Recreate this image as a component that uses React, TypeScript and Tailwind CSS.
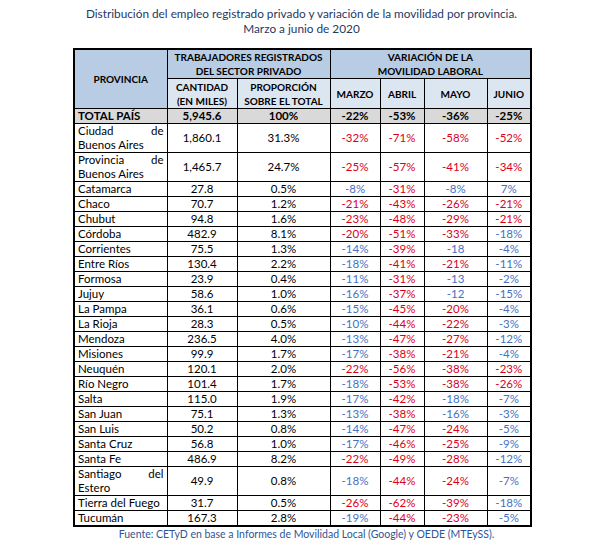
const ROWS: [string, string, string, number, number, number, number, boolean?][] = [
  ['Ciudad de|Buenos Aires', '1,860.1', '31.3%', -32, -71, -58, -52, true],
  ['Provincia de|Buenos Aires', '1,465.7', '24.7%', -25, -57, -41, -34, true],
  ['Catamarca', '27.8', '0.5%', -8, -31, -8, 7],
  ['Chaco', '70.7', '1.2%', -21, -43, -26, -21],
  ['Chubut', '94.8', '1.6%', -23, -48, -29, -21],
  ['Córdoba', '482.9', '8.1%', -20, -51, -33, -18],
  ['Corrientes', '75.5', '1.3%', -14, -39, -18, -4],
  ['Entre Ríos', '130.4', '2.2%', -18, -41, -21, -11],
  ['Formosa', '23.9', '0.4%', -11, -31, -13, -2],
  ['Jujuy', '58.6', '1.0%', -16, -37, -12, -15],
  ['La Pampa', '36.1', '0.6%', -15, -45, -20, -4],
  ['La Rioja', '28.3', '0.5%', -10, -44, -22, -3],
  ['Mendoza', '236.5', '4.0%', -13, -47, -27, -12],
  ['Misiones', '99.9', '1.7%', -17, -38, -21, -4],
  ['Neuquén', '120.1', '2.0%', -22, -56, -38, -23],
  ['Río Negro', '101.4', '1.7%', -18, -53, -38, -26],
  ['Salta', '115.0', '1.9%', -17, -42, -18, -7],
  ['San Juan', '75.1', '1.3%', -13, -38, -16, -3],
  ['San Luis', '50.2', '0.8%', -14, -47, -24, -5],
  ['Santa Cruz', '56.8', '1.0%', -17, -46, -25, -9],
  ['Santa Fe', '486.9', '8.2%', -22, -49, -28, -12],
  ['Santiago del|Estero', '49.9', '0.8%', -18, -44, -24, -7, true],
  ['Tierra del Fuego', '31.7', '0.5%', -26, -62, -39, -18],
  ['Tucumán', '167.3', '2.8%', -19, -44, -23, -5],
]

// cells without a % sign in the source
const NO_PCT = new Set(['Corrientes-2', 'Formosa-2', 'Jujuy-2'])

function pctClass(v: number, limit: number) {
  return v <= limit ? 'text-[#d9001b]' : 'text-[#4472c4]'
}

const LIMITS = [-20, -30, -20, -20]

export default function App() {
  return (
    <div className="h-[551px] w-[610px] bg-white font-['Lato',sans-serif] text-black">
      <div className="ml-[73px] w-[457px]">
        <div className="pt-[6px] text-center text-[11.8px] leading-[15px] text-[#1f3864]">
          <div className="-mx-4 whitespace-nowrap">
            Distribución del empleo registrado privado y variación de la movilidad por provincia.
          </div>
          <div>Marzo a junio de 2020</div>
        </div>

        <table className="mt-[12px] w-[457px] table-fixed border-collapse border-2 border-black text-[11.5px] leading-[14px]">
          <colgroup>
            <col className="w-[93px]" />
            <col className="w-[70px]" />
            <col className="w-[93px]" />
            <col className="w-[50px]" />
            <col className="w-[44px]" />
            <col className="w-[63px]" />
            <col className="w-[44px]" />
          </colgroup>
          <thead className="text-[10px] font-bold leading-[14px]">
            <tr className="h-[28px]">
              <th rowSpan={2} className="border border-black bg-[#b8cce4] p-0">
                PROVINCIA
              </th>
              <th colSpan={2} className="border border-black bg-[#b8cce4] p-0">
                TRABAJADORES REGISTRADOS
                <br />
                DEL SECTOR PRIVADO
              </th>
              <th colSpan={4} className="border border-black bg-[#b8cce4] p-0">
                VARIACIÓN DE LA
                <br />
                MOVILIDAD LABORAL
              </th>
            </tr>
            <tr className="h-[30px]">
              <th className="border border-black bg-[#dce6f1] p-0">
                CANTIDAD
                <br />
                (EN MILES)
              </th>
              <th className="border border-black bg-[#dce6f1] p-0">
                PROPORCIÓN
                <br />
                SOBRE EL TOTAL
              </th>
              <th className="border border-black bg-[#dce6f1] p-0">MARZO</th>
              <th className="border border-black bg-[#dce6f1] p-0">ABRIL</th>
              <th className="border border-black bg-[#dce6f1] p-0">MAYO</th>
              <th className="border border-black bg-[#dce6f1] p-0">JUNIO</th>
            </tr>
          </thead>
          <tbody>
            <tr className="h-[15px] bg-[#d9d9d9] text-center font-bold">
              <td className="border border-black px-[3px] py-0 text-left">TOTAL PAÍS</td>
              <td className="border border-black p-0">5,945.6</td>
              <td className="border border-black p-0">100%</td>
              <td className="border border-black p-0">-22%</td>
              <td className="border border-black p-0">-53%</td>
              <td className="border border-black p-0">-36%</td>
              <td className="border border-black p-0">-25%</td>
            </tr>
            {ROWS.map(([name, qty, share, ...rest]) => {
              const vals = rest.slice(0, 4) as number[]
              const tall = rest[4] === true
              const [first, second] = name.split('|')
              return (
                <tr key={name} className={tall ? 'h-[29px]' : 'h-[15px]'}>
                  <td className="border border-black px-[3px] py-0">
                    {second ? (
                      <>
                        <div className="flex justify-between">
                          {first.split(' ').map((w) => (
                            <span key={w}>{w}</span>
                          ))}
                        </div>
                        <div>{second}</div>
                      </>
                    ) : (
                      first
                    )}
                  </td>
                  <td className="border border-black p-0 text-center">{qty}</td>
                  <td className="border border-black p-0 text-center">{share}</td>
                  {vals.map((v, i) => (
                    <td
                      key={i}
                      className={`border border-black p-0 text-center ${pctClass(v, LIMITS[i])}`}
                    >
                      {v}
                      {NO_PCT.has(`${first}-${i}`) ? '' : '%'}
                    </td>
                  ))}
                </tr>
              )
            })}
          </tbody>
        </table>

        <div className="pl-[10px] text-center text-[10.5px] leading-[15px] text-[#2f5597]">
          Fuente: CETyD en base a Informes de Movilidad Local (Google) y OEDE (MTEySS).
        </div>
      </div>
    </div>
  )
}
